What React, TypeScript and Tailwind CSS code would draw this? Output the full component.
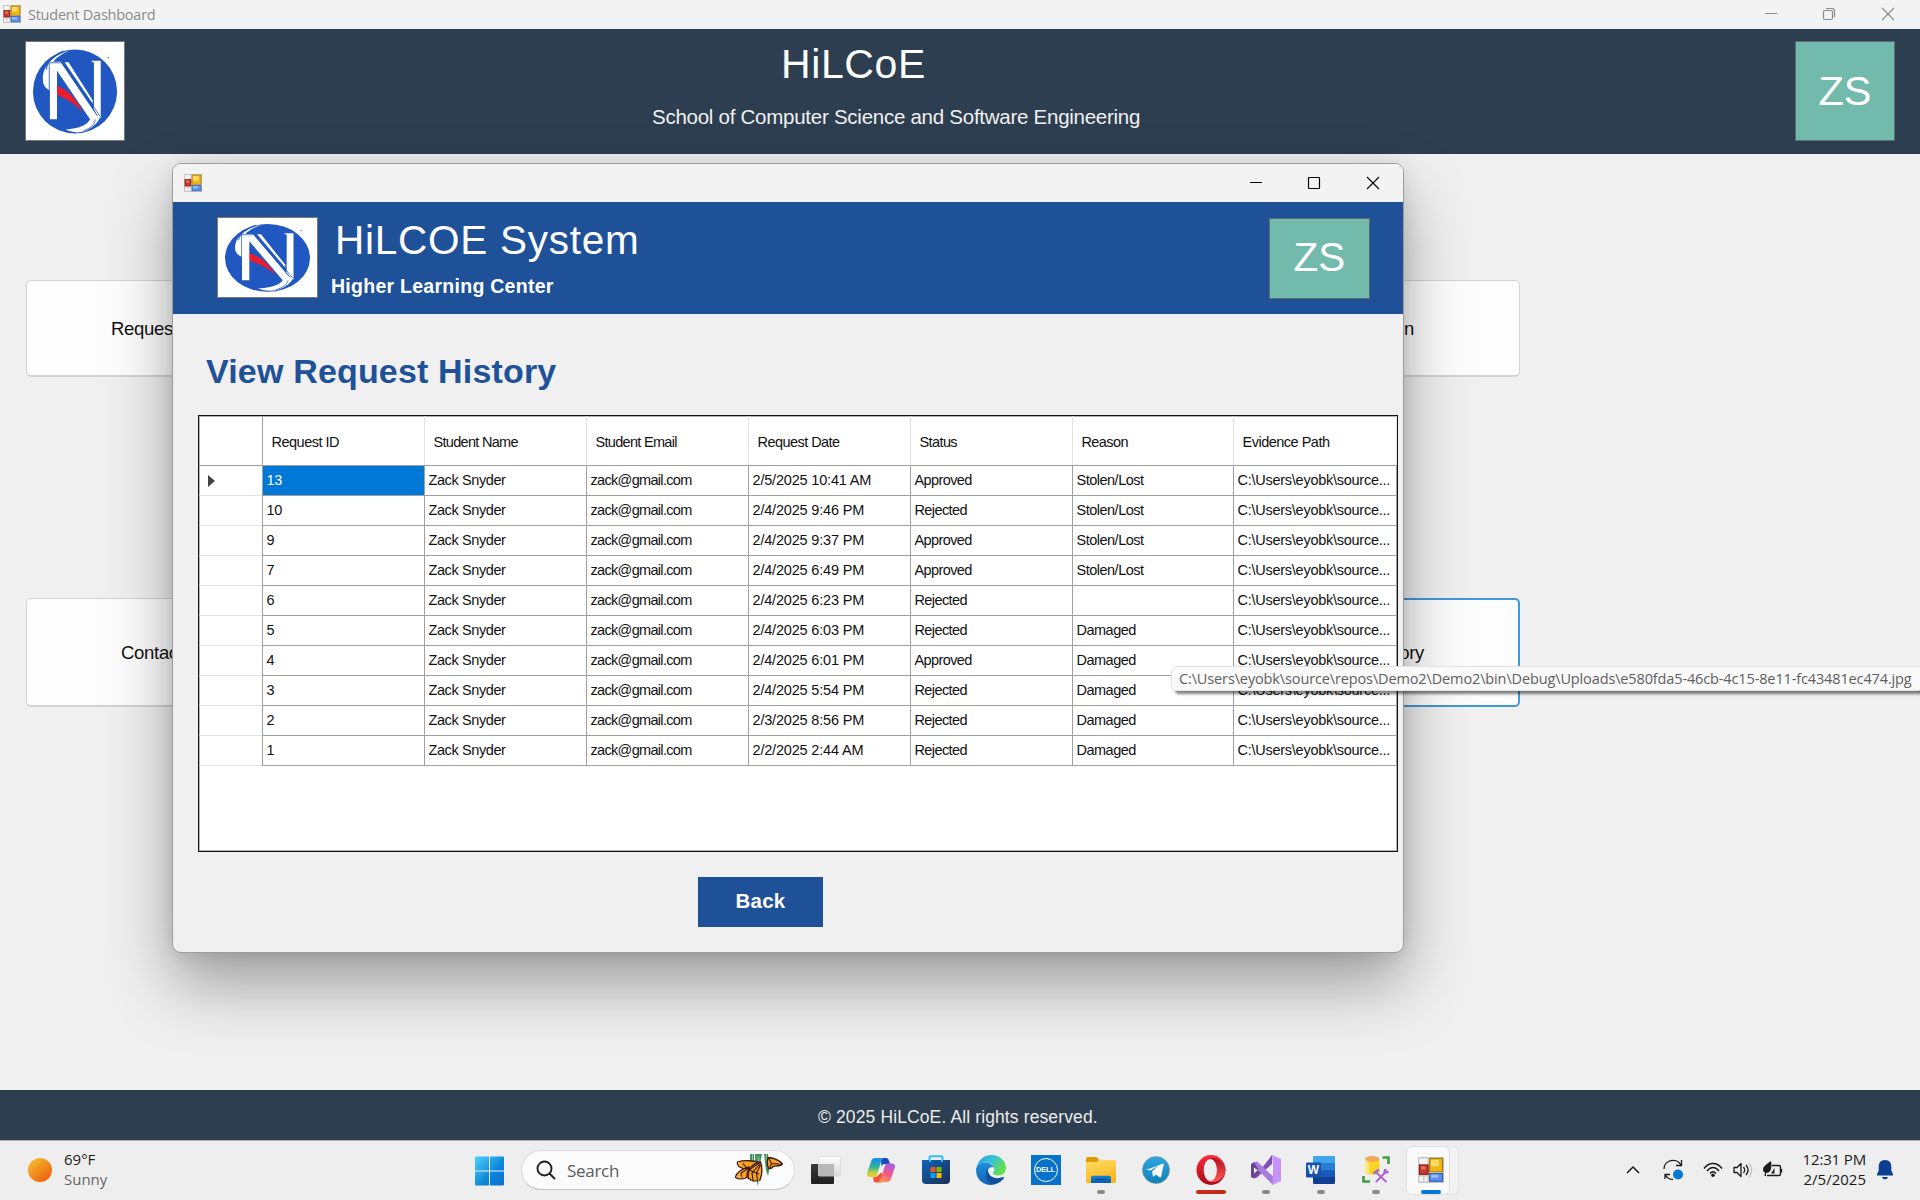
import type { ReactNode } from "react";

function Logo({ className }: { className: string }) {
  return (
    <svg className={className} viewBox="0 0 99 99" preserveAspectRatio="none">
      <rect width="99" height="99" fill="#fff" />
      <ellipse cx="49.5" cy="50" rx="42.500" ry="42.500" fill="#2057c0" />
      <path d="M44 8.500C30 12 17 23 17 37c0 6 2 9 7 12V26C27 18 35 12 44 8.500z" fill="#fff" />
      <path d="M38 9C28 13 22 19 20.500 28" stroke="#2057c0" strokeWidth="1" fill="none" />
      <path d="M66 70C67 82 58 87 40 88.500C48 92.500 57 92 63 88.500C70 84 74 80 74 76z" fill="#fff" />
      <path d="M70 78C69 84 65 87 58 90" stroke="#2057c0" strokeWidth=".8" fill="none" />
      <path d="M31 44C40 48 49 53 58 72C49 61 39 57 31 53z" fill="#ea1c2d" />
      <path d="M24 20H34.700L74 78H64.700L31.300 29V78H24z" fill="#fff" />
      <path d="M39 20.500H43L67.500 59V62.500z" fill="#fff" />
      <path d="M66.500 19H75.500V77H74L68.500 68V20.500H66.500z" fill="#fff" />
      <path d="M23.500 78V21H35M68 66V21M66 62L75 75.500" stroke="#2057c0" strokeWidth=".8" fill="none" />
      <rect x="82.500" y="15" width="1" height="1.500" fill="#444" />
    </svg>
  );
}

function FormIcon({ className }: { className: string }) {
  return (
    <svg className={className} viewBox="0 0 18 18">
      <rect x=".5" y=".5" width="17" height="17" fill="#f4f4f4" stroke="#c4c4c4" />
      <path d="M7 1v16M1 13h7M4 13v4" stroke="#c9c9c9" />
      <rect x="1" y="5.500" width="6" height="6.500" fill="#c8382c" stroke="#8e2018" strokeWidth=".8" />
      <rect x="2.200" y="6.500" width="3" height="2.200" fill="#e4705f" />
      <rect x="8" y="1" width="9" height="9.300" fill="#eeb51a" stroke="#a87c10" strokeWidth=".8" />
      <rect x="9" y="2" width="5.500" height="4.500" fill="#fbdb66" />
      <rect x="8" y="11.500" width="9" height="5.300" fill="#5a90ee" stroke="#3563b4" strokeWidth=".8" />
      <rect x="9" y="12.300" width="5" height="2" fill="#9dc0f8" />
    </svg>
  );
}

function WindowButtons({ restore = false, className }: { restore?: boolean; className: string }) {
  return (
    <div className={className}>
      <svg className="relative left-px h-3.5 w-3.5" viewBox="0 0 14 14" fill="none" stroke="currentColor" strokeWidth="1">
        <path d="M1 6.500h12" />
      </svg>
      <svg className="h-3.5 w-3.5" viewBox="0 0 14 14" fill="none" stroke="currentColor" strokeWidth="1.200">
        {restore ? (
          <>
            <rect x="1.500" y="3.500" width="9" height="9" rx="1.500" />
            <path d="M4 1.500h6a2.500 2.500 0 0 1 2.500 2.500v6" />
          </>
        ) : (
          <rect x="1.500" y="1.500" width="11" height="11" rx=".8" />
        )}
      </svg>
      <svg className="h-3.5 w-3.5" viewBox="0 0 14 14" fill="none" stroke="currentColor" strokeWidth="1.100">
        <path d="M1 1l12 12M13 1L1 13" />
      </svg>
    </div>
  );
}

const columns = [
  { title: "Request ID", head: "tracking-[-0.5px]", cell: "tracking-[-0.2px]" },
  { title: "Student Name", head: "tracking-[-0.7px]", cell: "tracking-[-0.4px]" },
  { title: "Student Email", head: "tracking-[-0.7px]", cell: "tracking-[-0.68px]" },
  { title: "Request Date", head: "tracking-[-0.55px]", cell: "tracking-[-0.18px]" },
  { title: "Status", head: "tracking-[-0.6px]", cell: "tracking-[-0.6px]" },
  { title: "Reason", head: "tracking-[-0.6px]", cell: "tracking-[-0.5px]" },
  { title: "Evidence Path", head: "tracking-[-0.5px]", cell: "tracking-[-0.26px]" },
];

const requests = [
  ["13", "2/5/2025 10:41 AM", "Approved", "Stolen/Lost"],
  ["10", "2/4/2025 9:46 PM", "Rejected", "Stolen/Lost"],
  ["9", "2/4/2025 9:37 PM", "Approved", "Stolen/Lost"],
  ["7", "2/4/2025 6:49 PM", "Approved", "Stolen/Lost"],
  ["6", "2/4/2025 6:23 PM", "Rejected", ""],
  ["5", "2/4/2025 6:03 PM", "Rejected", "Damaged"],
  ["4", "2/4/2025 6:01 PM", "Approved", "Damaged"],
  ["3", "2/4/2025 5:54 PM", "Rejected", "Damaged"],
  ["2", "2/3/2025 8:56 PM", "Rejected", "Damaged"],
  ["1", "2/2/2025 2:44 AM", "Rejected", "Damaged"],
];

const gridCols = "grid grid-cols-[64px_162px_162px_162px_162px_162px_161px_163px]";

function RequestTable() {
  return (
    <div className="mt-[22px] ml-[25px] h-[437px] w-[1200px] border border-[#141414] bg-white text-[14.5px] text-[#111] shadow-[inset_0_0_0_1px_#b4b4b4]">
      <div className={`${gridCols} h-[50px]`}>
        <div className="border-r border-b border-[#a0a0a0]" />
        {columns.map((c) => (
          <div key={c.title} className="border-b border-[#a0a0a0]">
            <div className={`${c.head} flex h-full items-center border-r border-[#e2e2e2] pt-1 pl-[8.5px] whitespace-nowrap`}>{c.title}</div>
          </div>
        ))}
      </div>
      {requests.map(([id, date, status, reason], r) => (
        <div key={id} className={`${gridCols} h-[30px]`}>
          <div className="border-r border-[#a0a0a0]">
            <div className="flex h-full items-center border-b border-[#e2e2e2] pl-[9px]">
              {r === 0 && (
                <svg className="h-3 w-[7px]" viewBox="0 0 7 12">
                  <path d="M0 0L7 6L0 12z" fill="#444" />
                </svg>
              )}
            </div>
          </div>
          {[id, "Zack Snyder", "zack@gmail.com", date, status, reason, "C:\\Users\\eyobk\\source..."].map((v, i) => (
            <div
              key={i}
              className={`${columns[i].cell} ${r === 0 && i === 0 ? "bg-[#0078d7] text-white" : ""} flex items-center border-r border-b border-[#a0a0a0] pt-px pl-[3.5px] whitespace-nowrap`}
            >
              {v}
            </div>
          ))}
        </div>
      ))}
    </div>
  );
}

function HistoryWindow() {
  return (
    <div className="absolute top-[163px] left-[172px] flex h-[790px] w-[1232px] flex-col overflow-hidden rounded-[9px] border border-[#9c9c9c] bg-[#f0f0f0] shadow-[0_32px_64px_rgba(0,0,0,0.34),0_2px_20px_rgba(0,0,0,0.1)]">
      <div className="flex h-[38px] shrink-0 items-center bg-[#f3f3f3] pl-[11px]">
        <FormIcon className="-mt-px h-[18px] w-[18px]" />
        <WindowButtons className="mr-[23px] ml-auto flex gap-[45px] text-black" />
      </div>
      <div className="flex h-[112px] shrink-0 bg-[#1f5199] text-white">
        <Logo className="mt-[15px] ml-11 h-[81px] w-[101px] border border-[#777]" />
        <div className="ml-[13px] pt-[14px] whitespace-nowrap">
          <div className="flex h-12 items-center pl-1 text-[40.5px] tracking-[0.75px]">HiLCOE System</div>
          <div className="mt-2.5 flex h-[26px] items-center text-[19.5px] font-bold tracking-[0.27px]">Higher Learning Center</div>
        </div>
        <div className="mt-4 mr-[33px] ml-auto flex h-[81px] w-[101px] items-center justify-center border border-[#5d6e69] bg-[#72baab] pb-[3px] text-[40.5px]">ZS</div>
      </div>
      <div className="mt-[35px] ml-[33px] flex h-11 items-center text-[34px] font-bold tracking-[0.17px] text-[#1f5199]">View Request History</div>
      <RequestTable />
      <div className="mt-[25px] ml-[525px] flex h-[50px] w-[125px] items-center justify-center bg-[#1f5199] pb-0.5 text-[20.5px] font-bold tracking-[0.2px] text-white">Back</div>
    </div>
  );
}

function Slot({ children, bar }: { children: ReactNode; bar?: string }) {
  return (
    <div className="relative flex h-full w-[55px] items-center justify-center">
      <div className="-mt-px">{children}</div>
      {bar && <div className={`${bar} absolute bottom-1.5 h-1 rounded-full`} />}
    </div>
  );
}

function Butterflies() {
  return (
    <svg className="h-8 w-12" viewBox="0 0 48 32">
      <path d="M15 0h4v9h-4zM20 0h4l1 14-2 18-2-8zM24 0h3l-2 10zM29 0h4v8l2 4-2 10-2-6z" fill="#3f8f5c" />
      <path d="M17.500 0v10M23 2l.5 10M31 0l2 14" stroke="#8cc9a0" />
      <g fill="#f7a21e" stroke="#3a1614" strokeWidth="1.300" strokeLinejoin="round">
        <path d="M24 8.500C19 6.500 9 6 2.500 8c-.8 1.500.5 4 3 5.500L15 17z" />
        <path d="M14 13C9 14 1 18 .6 23.500c3 2 8 2 12-.5z" />
        <path d="M25.500 8c-7 1-14 8-13.500 14 1.500 4.500 8 6.500 13 4 2-5 2.500-12 .5-18z" />
        <path d="M33 3.500c5 0 11 3 14.500 6.500-2 2.500-7 1.500-9 2.500-2 2-4 2.500-5 1.500-1.500-3-1.500-7-.5-10.500z" />
      </g>
      <path d="M25.500 8L14 16l-1 7M25 10l-8 9 1 7M25.500 11l-4 8 1 7.500M8 9.500l4 5M14 14l-8 5 1 5M33.500 4l3 5.500 9 .5M36.500 9.500L35 14M14 16l10 4" stroke="#3a1614" strokeWidth="1.100" fill="none" />
      <path d="M3.500 8.500l1.500 4M1.500 22.500l8 1M14 25.500c3 2 6 2.500 10 1M42 8l4 2" stroke="#fff" strokeWidth=".9" strokeDasharray=".9 1.500" fill="none" />
    </svg>
  );
}

function TaskbarApps() {
  return (
    <>
      <Slot>
        <svg className="h-[30px] w-[32px]" viewBox="0 0 32 30">
          <defs>
            <linearGradient id="tvDark" x2="0" y2="1"><stop stopColor="#3a3a3a" /><stop offset="1" stopColor="#1f1f1f" /></linearGradient>
            <linearGradient id="tvLight" x2="0" y2="1"><stop stopColor="#fdfdfd" /><stop offset="1" stopColor="#dadada" /></linearGradient>
          </defs>
          <rect x="1" y="9" width="23" height="20" rx="1" fill="url(#tvDark)" />
          <rect x="8.500" y="1.500" width="22" height="19.500" rx="1" fill="url(#tvLight)" stroke="#dadada" strokeWidth=".8" />
          <path d="M8.500 9H24v12H8.500z" fill="#b8b8b8" />
        </svg>
      </Slot>
      <Slot>
        <svg className="h-7 w-7" viewBox="0 0 28 28">
          <defs>
            <linearGradient id="cpA" x1="0" y1="0" x2="0" y2="1"><stop stopColor="#1b8df0" /><stop offset=".45" stopColor="#28b3a0" /><stop offset=".8" stopColor="#c8d63a" /><stop offset="1" stopColor="#f6c02a" /></linearGradient>
            <linearGradient id="cpB" x1=".8" y1="0" x2=".2" y2="1"><stop stopColor="#a45cf0" /><stop offset=".5" stopColor="#ee5a8c" /><stop offset="1" stopColor="#ff9a4a" /></linearGradient>
          </defs>
          <path d="M14 2h5c1.500 0 2.300.8 2.800 2.200L23 8h-5c-2 0-3 1-3.500 3z" fill="#1a49b8" />
          <path d="M7 26c3 1 7 .5 9.500 0 2-.5 3-2 3.500-3.500l-6-6-4 4-4 1 .6 2.500C6.800 25 6.600 25.700 7 26z" fill="#f2543a" />
          <path d="M8 2h9c-2 1-2.600 2.500-3.200 4.500l-3.600 12C9.600 20.300 8.400 21 7 21H3c-2.600 0-3.400-2-2.700-4.500L4 5.500C4.700 3.200 6 2 8 2z" fill="url(#cpA)" />
          <path d="M20 26h-9c2-1 2.600-2.500 3.200-4.500l3.600-11.500C18.400 8.200 19.600 7.500 21 7.500h4c2.600 0 3.400 2 2.700 4.500L24 22.500C23.300 24.800 22 26 20 26z" fill="url(#cpB)" />
        </svg>
      </Slot>
      <Slot>
        <svg className="h-[30px] w-[30px]" viewBox="0 0 30 30">
          <defs><linearGradient id="store" x2="1" y2="1"><stop stopColor="#0f65bd" /><stop offset="1" stopColor="#1d2d50" /></linearGradient></defs>
          <path d="M8.500 7V2.500a1.200 1.200 0 0 1 1.200-1.200h10.600a1.200 1.200 0 0 1 1.200 1.200V7" fill="none" stroke="#2cc0ee" strokeWidth="2" />
          <path d="M1 5h28v20a4 4 0 0 1-4 4H5a4 4 0 0 1-4-4z" fill="url(#store)" />
          <path d="M8 7V5h2v2M20 7V5h2v2" fill="#2cc0ee" />
          <path fill="#f25022" d="M9.500 12h5v5h-5z" /><path fill="#7fba00" d="M15.500 12h5v5h-5z" /><path fill="#00a4ef" d="M9.500 18h5v5h-5z" /><path fill="#ffb900" d="M15.500 18h5v5h-5z" />
        </svg>
      </Slot>
      <Slot>
        <svg className="h-[30px] w-[30px]" viewBox="0 0 30 30">
          <defs>
            <linearGradient id="edA" x2="1" y2=".5"><stop stopColor="#2a9fe0" /><stop offset=".5" stopColor="#33c3d8" /><stop offset="1" stopColor="#66e04a" /></linearGradient>
            <linearGradient id="edB" x2="0" y2="1"><stop stopColor="#1f8fd8" /><stop offset="1" stopColor="#0f62b8" /></linearGradient>
          </defs>
          <path d="M1 12C2 5 8 0 15 0c9 0 15 6 15 13 0 4-3 7.500-8 7.500-3 0-5-1-5-2.500 0-1 1.300-1.500 1.300-3.500C18 10 14 7.500 10 7.500 6 7.500 3 9 1 12z" fill="url(#edA)" />
          <path d="M0 15c0-4 4-7.500 9.500-7.500 4 0 7 2 8.500 5-3-1.500-6.500 1-6.500 5C11.500 24 17 29 23 27c-2.500 2-5.200 3-8 3C6.500 30 0 23.500 0 15z" fill="url(#edB)" />
          <path d="M12 13.500C8.500 18 9.500 25.500 15 28.500c5 1.500 10-1 13-5.800.4-.7-.2-1-.8-.7C20 25 11 22 12 13.500z" fill="#10509a" />
        </svg>
      </Slot>
      <Slot>
        <div className="flex h-[30px] w-[30px] items-center justify-center bg-[#0672cb]">
          <div className="flex h-6 w-6 items-center justify-center rounded-full border-[1.5px] border-white text-[7.5px] font-bold tracking-[-0.2px] text-white">DELL</div>
        </div>
      </Slot>
      <Slot bar="w-2 bg-[#8a8a8a]">
        <svg className="h-[30px] w-[30px]" viewBox="0 0 30 30">
          <defs>
            <linearGradient id="fold" x2=".3" y2="1"><stop stopColor="#ffdd6a" /><stop offset="1" stopColor="#f9b81a" /></linearGradient>
            <linearGradient id="foldB" x2="0" y2="1"><stop stopColor="#1684d8" /><stop offset="1" stopColor="#0a5ca8" /></linearGradient>
          </defs>
          <path d="M0 3.500A1.500 1.500 0 0 1 1.500 2h8c1 0 1.500.5 2.200 1.200L13.500 5v4H0z" fill="#dc9c00" />
          <path d="M0 7h9.500c1 0 1.500-.3 2.200-1l.6-.5c.4-.4.8-.5 1.400-.5h14.800A1.500 1.500 0 0 1 30 6.500v20a1.500 1.500 0 0 1-1.500 1.500h-27A1.500 1.500 0 0 1 0 26.500z" fill="url(#fold)" />
          <path d="M5 28v-5.500A1.800 1.800 0 0 1 6.800 20.700h16.400a1.800 1.800 0 0 1 1.800 1.800V28z" fill="url(#foldB)" />
          <path d="M9 24.300h12" stroke="#06407c" strokeWidth="1" />
        </svg>
      </Slot>
      <Slot>
        <svg className="h-7 w-7" viewBox="0 0 28 28">
          <defs><linearGradient id="tg" x2="0" y2="1"><stop stopColor="#30a5e0" /><stop offset="1" stopColor="#1180b8" /></linearGradient></defs>
          <circle cx="14" cy="14" r="13.500" fill="url(#tg)" stroke="#78909c" strokeWidth=".6" />
          <path d="M5.500 13.600L20.500 7.800c.7-.3 1.300.2 1.100 1.200l-2.500 11.600c-.2.9-.7 1.100-1.500.7l-3.800-2.800-1.900 1.800c-.5.5-1 .3-1.100-.3l-.6-4.700 7-6-9 5.300-3-.9c-.7-.2-.7-.7.300-1.100z" fill="#fff" />
        </svg>
      </Slot>
      <Slot bar="w-[30px] bg-[#c42b1c]">
        <svg className="h-[30px] w-[30px]" viewBox="0 0 30 30">
          <defs>
            <linearGradient id="opA" x2="0" y2="1"><stop stopColor="#ff2a3c" /><stop offset="1" stopColor="#a40a18" /></linearGradient>
            <linearGradient id="opB" x2="0" y2="1"><stop stopColor="#b0101c" /><stop offset="1" stopColor="#ff5c58" /></linearGradient>
          </defs>
          <ellipse cx="15" cy="15" rx="14.500" ry="15" fill="url(#opA)" />
          <path d="M10.500 5C13 2.800 18 2 22 4.500c5 3 7.500 6.500 7.500 10.500s-2.500 8-7.500 10.800c-4 2-9 1.700-11.500-1z" fill="url(#opB)" />
          <ellipse cx="14.300" cy="15" rx="6.600" ry="11" fill="#eee" />
        </svg>
      </Slot>
      <Slot bar="w-2 bg-[#8a8a8a]">
        <svg className="h-[30px] w-[30px]" viewBox="0 0 30 30">
          <path d="M0 9l3-2 7 5.500-3 3L3 12.500v6L7 15l3 3-7 5.500L0 22z" fill="#6a4596" />
          <path d="M3 23.500L21 0v9L6 22.500z" fill="#7d52b4" />
          <path d="M3 7l3-.5L22 21v9L9 17z" fill="#a77be0" />
          <path d="M21 0l9 4v22l-8.500 4L22 21V9z" fill="#c793fa" />
          <path d="M22 9v12l-7-6z" fill="#eee" />
        </svg>
      </Slot>
      <Slot bar="w-2 bg-[#8a8a8a]">
        <div className="relative h-7 w-[29px]">
          <svg className="h-7 w-[29px]" viewBox="0 0 29 28">
            <path fill="#41a5ee" d="M8 0h20a1 1 0 0 1 1 1v6H7V1a1 1 0 0 1 1-1z" /><path fill="#2b7cd3" d="M7 7h22v7H7z" /><path fill="#185abd" d="M7 14h22v7H7z" /><path fill="#103f91" d="M7 21h22v6a1 1 0 0 1-1 1H8a1 1 0 0 1-1-1z" />
            <rect y="6.500" width="15" height="15" rx="1" fill="#1850ae" />
          </svg>
          <span className="absolute top-[6px] left-0 w-[15px] text-center text-[12px] leading-4 font-bold text-white">W</span>
        </div>
      </Slot>
      <Slot bar="w-2 bg-[#8a8a8a]">
        <svg className="h-[30px] w-[30px]" viewBox="0 0 30 30">
          <path d="M4 4v13c0 1.500 3 2.500 7.500 2.500s7-1 7-2.500V4z" fill="#fbd428" />
          <path d="M4 4v13c0 1 1.500 1.800 4 2.200V4z" fill="#fde680" />
          <ellipse cx="11.200" cy="4" rx="7.200" ry="2.900" fill="#f0a85a" />
          <path d="M21.500 2.500h6V9M2.500 21v5.500H9" stroke="#3f9a46" strokeWidth="2.600" fill="none" />
          <path d="M14.500 17l11 10M25.500 16L15 27" stroke="#a766cf" strokeWidth="1.900" />
          <path d="M12.500 18.500l5.500-4M22.500 17.500l5-.5M24.500 14l-1 4" stroke="#a766cf" strokeWidth="2.600" />
        </svg>
      </Slot>
      <div className="relative flex h-full w-[55px] items-center justify-center">
        <div className="absolute top-[5px] left-[8px] h-[49px] w-12 rounded-md border border-[#e3e3e3] bg-[#f3f3f3]" />
        <div className="absolute top-[5px] left-[3px] h-[49px] w-11 rounded-md border border-[#e0e0e0] bg-[#f9f9f9]" />
        <div className="relative -top-px"><FormIcon className="h-[26px] w-[26px]" /></div>
        <div className="absolute bottom-1.5 left-[18px] h-1 w-5 rounded-full bg-[#0078d4]" />
      </div>
    </>
  );
}

function Tray() {
  return (
    <div className="-mt-px ml-[168px] flex items-center text-[#1b1b1b]">
      <svg className="h-[14px] w-[14px]" viewBox="0 0 14 14" fill="none" stroke="currentColor" strokeWidth="1.500">
        <path d="M1 10l6-6 6 6" />
      </svg>
      <svg className="ml-[22px] h-[22px] w-[22px]" viewBox="0 0 22 22" fill="none" stroke="currentColor" strokeWidth="1.300">
        <path d="M2 10A9 8.500 0 0 1 19 6M19.500 1v5.500H14M3 20v-4.500h5M3 15.500C5 19 8 20.500 11 20.500" />
        <circle cx="16" cy="15.500" r="5" fill="#0078d4" stroke="none" />
      </svg>
      <svg className="ml-[19px] h-4 w-5" viewBox="0 0 20 16" fill="none" stroke="currentColor" strokeWidth="1.400">
        <path d="M1 6.500C6-.2 14-.2 19 6.500M4 9C7.500 4.300 12.500 4.300 16 9M7 11.500c2-2.400 4-2.400 6 0" />
        <circle cx="10" cy="13.200" r="1.700" fill="currentColor" stroke="none" />
      </svg>
      <svg className="ml-2.5 h-4 w-[21px]" viewBox="0 0 21 16" fill="none" stroke="currentColor" strokeWidth="1.300">
        <path d="M1 5.500h3L8 1.500v13l-4-4H1z" strokeLinejoin="round" />
        <path d="M10.500 5c1.400 1.800 1.400 4.200 0 6M13 3c2.500 3 2.500 7 0 10" />
        <path d="M16 1c3.500 4 3.500 10 0 14" stroke="#c4c4c4" />
      </svg>
      <svg className="ml-[9px] h-[18px] w-5" viewBox="0 0 20 18" fill="none" stroke="currentColor" strokeWidth="1.400">
        <path d="M9 4.500h7a1.500 1.500 0 0 1 1.500 1.500v7a1.500 1.500 0 0 1-1.500 1.500H4M18.500 8v3.500" />
        <path d="M8 12.500L11.500 7v5.500z" fill="currentColor" stroke="none" />
        <path d="M0 9c0-4 3-5 8-9 1 6 .5 12-5 12v3H1.500l.5-3.500C.7 11 0 10 0 9z" fill="currentColor" stroke="none" />
      </svg>
      <div className="-mt-0.5 ml-[17px] w-[66px] text-right font-['Open_Sans',sans-serif] text-[15px] leading-5 whitespace-nowrap">
        <div className="tracking-[-0.15px]">12:31 PM</div>
        <div>2/5/2025</div>
      </div>
      <svg className="ml-[11px] h-5 w-4" viewBox="0 0 16 20" fill="#0a3f91">
        <path d="M8 0c4 0 6.300 2.800 6.300 6.500v4.200L16 14v1.500H0V14l1.700-3.300V6.500C1.700 2.800 4 0 8 0zM5 17h6c-.5 1.500-1.500 2.300-3 2.300S5.500 18.500 5 17z" />
      </svg>
    </div>
  );
}

export default function App() {
  return (
    <div className="relative flex h-[1200px] w-[1920px] flex-col overflow-hidden bg-[#f0f0f0] font-['Liberation_Sans',Arial,sans-serif]">
      <div className="flex h-[29px] shrink-0 items-center bg-[#f3f3f3] pl-[3px]">
        <FormIcon className="-mt-px h-[18px] w-[18px]" />
        <span className="ml-[7px] font-['Open_Sans',sans-serif] text-[14.5px] tracking-[-0.25px] text-[#8a8a8a]">Student Dashboard</span>
        <WindowButtons restore className="-mt-0.5 mr-[25px] ml-auto flex gap-[45px] text-[#8a8a8a]" />
      </div>

      <header className="flex h-[125px] shrink-0 bg-[#2d3e50] text-white">
        <Logo className="mt-3 ml-[25px] h-[100px] w-[100px] border border-[#777]" />
        <div className="pt-3 whitespace-nowrap">
          <div className="flex h-[47px] items-center pl-[656px] text-[41px] tracking-[0.6px]">HiLCoE</div>
          <div className="mt-3.5 flex h-[30px] items-center pl-[527px] text-[20.5px] tracking-[-0.26px] text-[#f0f0f0]">School of Computer Science and Software Engineering</div>
        </div>
        <div className="mt-3 mr-[25px] ml-auto flex h-[100px] w-[100px] items-center justify-center border border-[#5d6e69] bg-[#72baab] text-[41.5px]">ZS</div>
      </header>

      <main className="flex flex-1 flex-col pt-[126px] pl-[26px] text-[18.5px] whitespace-nowrap text-[#111]">
        <div className="flex h-[97px] w-[1494px] justify-between">
          <div className="flex w-[358px] items-center rounded-[5px] border border-b-2 border-[#d3d3d3] bg-[#fdfdfd] pt-px pl-[84px] tracking-[-0.3px]">Request</div>
          <div className="flex w-[358px] items-center justify-end rounded-[5px] border border-b-2 border-[#d3d3d3] bg-[#fdfdfd] pt-px pr-[105px] tracking-[-0.3px]">Information</div>
        </div>
        <div className="mt-[221px] flex h-[109px] w-[1494px] justify-between">
          <div className="flex w-[358px] items-center rounded-[5px] border border-b-2 border-[#d3d3d3] bg-[#fdfdfd] pt-px pl-[94px] tracking-[-0.3px]">Contact</div>
          <div className="flex w-[358px] items-center justify-end rounded-[5px] border-2 border-[#409ad8] bg-[#fdfdfd] pr-[94px] tracking-[-0.3px]">History</div>
        </div>
      </main>

      <footer className="flex h-[50px] shrink-0 items-center bg-[#2d3e50] pt-1 pl-[818px] text-[17.5px] tracking-[0.12px] text-[#ececec]">© 2025 HiLCoE. All rights reserved.</footer>

      <div className="flex h-[60px] shrink-0 items-center border-t border-[#b5b5b5] bg-[#eee]">
        <div className="-mt-0.5 flex w-[475px] shrink-0 items-center pl-7">
          <svg className="h-6 w-6" viewBox="0 0 24 24">
            <defs><linearGradient id="sun" x1=".15" y1=".1" x2=".8" y2=".9"><stop stopColor="#f3b932" /><stop offset="1" stopColor="#f0630c" /></linearGradient></defs>
            <circle cx="12" cy="12" r="12" fill="url(#sun)" />
          </svg>
          <div className="-mt-0.5 ml-3 font-['Open_Sans',sans-serif] text-[15px] leading-5">
            <div className="text-[#1b1b1b]">69°F</div>
            <div className="text-[#666]">Sunny</div>
          </div>
        </div>
        <svg className="h-[30px] w-[29px] shrink-0" viewBox="0 0 29 29">
          <defs><linearGradient id="win" gradientUnits="userSpaceOnUse" x1="0" y1="0" x2="29" y2="29"><stop stopColor="#4fd2ff" /><stop offset=".6" stopColor="#0a84d8" /><stop offset="1" stopColor="#0a6fd0" /></linearGradient></defs>
          <path d="M1 0h13v14H0V1a1 1 0 0 1 1-1zM15 0h13a1 1 0 0 1 1 1v13H15zM0 15h14v14H1a1 1 0 0 1-1-1zM15 15h14v13a1 1 0 0 1-1 1H15z" fill="url(#win)" />
        </svg>
        <div className="-mt-px ml-[17px] flex h-10 w-[274px] shrink-0 items-center rounded-full border border-b-[1.5px] border-[#dcdcdc] border-b-[#c4c4c4] bg-[#fbfbfb] pl-[14px]">
          <svg className="h-5 w-5" viewBox="0 0 20 20" fill="none" stroke="#222" strokeWidth="1.900">
            <circle cx="8.500" cy="8.500" r="7" /><path d="M13.500 13.500L19 19" />
          </svg>
          <span className="ml-[11px] pt-px font-['Open_Sans',sans-serif] text-[17px] tracking-[-0.3px] text-[#5c5c5c]">Search</span>
          <div className="mr-[11px] ml-auto"><Butterflies /></div>
        </div>
        <div className="ml-[3px] flex h-full shrink-0"><TaskbarApps /></div>
        <Tray />
      </div>

      <HistoryWindow />

      <div className="absolute top-[666px] left-[1171px] flex h-[25px] w-[752px] items-center rounded-[5px] border border-[#e2e2e2] bg-[#f9f9f9] pl-[7px] font-['Open_Sans',sans-serif] text-[14.5px] tracking-[-0.13px] whitespace-nowrap text-[#5f5f5f] shadow-[3px_4px_3px_-1px_rgba(0,0,0,0.5)]">
        C:\Users\eyobk\source\repos\Demo2\Demo2\bin\Debug\Uploads\e580fda5-46cb-4c15-8e11-fc43481ec474.jpg
      </div>
    </div>
  );
}
